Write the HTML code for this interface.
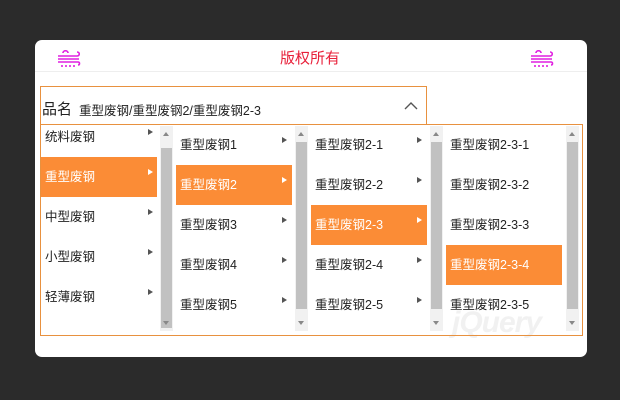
<!DOCTYPE html>
<html><head><meta charset="utf-8"><style>
*{margin:0;padding:0;box-sizing:border-box}
body{width:620px;height:400px;background:#2b2b2b;position:relative;overflow:hidden;font-family:"Liberation Sans","Noto Sans CJK SC",sans-serif}
.card{position:absolute;left:35px;top:40px;width:552px;height:317px;background:#fff;border-radius:7px}
.hr{position:absolute;left:35px;top:71px;width:552px;height:1px;background:#eee}
.title{position:absolute;left:260px;top:47px;width:100px;text-align:center;color:#e8203a;font-size:15px}
.ico{position:absolute;top:48px}
.inp{position:absolute;left:40px;top:86px;width:387px;height:39px;border:1px solid #e8913f;border-bottom:none}
.inp .l{position:absolute;left:1px;top:11px;font-size:15px;color:#222}
.inp .v{position:absolute;left:38px;top:13px;font-size:12.5px;color:#222}
.panel{position:absolute;left:40px;top:124px;width:543px;height:212px;border:1px solid #e8913f}
.col{position:absolute;top:125px;height:210px;overflow:hidden}
.it{position:absolute;left:0;height:40px;line-height:40px;font-size:12.5px;color:#222;padding-left:4px}
.it.on{background:#fb8c36;color:#fff}
.tri{position:absolute;width:0;height:0;border-left:5px solid #555;border-top:3.5px solid transparent;border-bottom:3.5px solid transparent}
.on .tri{border-left-color:#fff}
.sb{position:absolute;top:126px;width:13px;height:205px;background:#f1f1f1}
.sb .th{position:absolute;left:1px;width:11px;background:#c1c1c1}
.sb .up{position:absolute;left:3px;top:6px;border-bottom:4px solid #888;border-left:3.5px solid transparent;border-right:3.5px solid transparent}
.sb .dn{position:absolute;left:3px;bottom:6px;border-top:4px solid #888;border-left:3.5px solid transparent;border-right:3.5px solid transparent}
.wm{position:absolute;left:452px;top:306px;font-size:30px;font-style:italic;font-weight:bold;color:#f1f1f1;letter-spacing:-1px}
</style></head><body>
<div class="card"></div>
<div class="hr"></div>
<svg class="ico" style="left:57px" width="24" height="20" viewBox="0 0 24 20" fill="none" stroke="#e020e0" stroke-width="1.6"><path d="M6 5c0-3 5-3 5 0M1 8h19c3 0 3-4 0-4M1 11h21M1 14h20c2 0 2 3 0 3M5 17v2M9 17v2M13 17v2M17 17v2"/></svg>
<svg class="ico" style="left:530px" width="24" height="20" viewBox="0 0 24 20" fill="none" stroke="#e020e0" stroke-width="1.6"><path d="M6 5c0-3 5-3 5 0M1 8h19c3 0 3-4 0-4M1 11h21M1 14h20c2 0 2 3 0 3M5 17v2M9 17v2M13 17v2M17 17v2"/></svg>
<div class="title">版权所有</div>
<div class="inp"><span class="l">品名</span><span class="v">重型废钢/重型废钢2/重型废钢2-3</span>
<svg style="position:absolute;left:363px;top:14px" width="14" height="9" viewBox="0 0 14 9"><path d="M1 8L7 2L13 8" fill="none" stroke="#555" stroke-width="1.4"/></svg></div>
<div class="wm">jQuery</div>
<div class="panel"></div>

<div class="col" style="left:41px;width:116px">
<div class="it" style="top:-8px;width:116px">统料废钢<i class="tri" style="left:107px;top:12px"></i></div>
<div class="it on" style="top:32px;width:116px">重型废钢<i class="tri" style="left:107px;top:12px"></i></div>
<div class="it" style="top:72px;width:116px">中型废钢<i class="tri" style="left:107px;top:12px"></i></div>
<div class="it" style="top:112px;width:116px">小型废钢<i class="tri" style="left:107px;top:12px"></i></div>
<div class="it" style="top:152px;width:116px">轻薄废钢<i class="tri" style="left:107px;top:12px"></i></div>
</div>
<div class="sb" style="left:160px"><div class="up"></div><div class="th" style="top:22px;height:180px"></div><div class="dn"></div></div>

<div class="col" style="left:176px;width:116px">
<div class="it" style="top:0;width:116px">重型废钢1<i class="tri" style="left:106px;top:12px"></i></div>
<div class="it on" style="top:40px;width:116px">重型废钢2<i class="tri" style="left:106px;top:12px"></i></div>
<div class="it" style="top:80px;width:116px">重型废钢3<i class="tri" style="left:106px;top:12px"></i></div>
<div class="it" style="top:120px;width:116px">重型废钢4<i class="tri" style="left:106px;top:12px"></i></div>
<div class="it" style="top:160px;width:116px">重型废钢5<i class="tri" style="left:106px;top:12px"></i></div>
</div>
<div class="sb" style="left:295px"><div class="up"></div><div class="th" style="top:16px;height:167px"></div><div class="dn"></div></div>

<div class="col" style="left:311px;width:116px">
<div class="it" style="top:0;width:116px">重型废钢2-1<i class="tri" style="left:106px;top:12px"></i></div>
<div class="it" style="top:40px;width:116px">重型废钢2-2<i class="tri" style="left:106px;top:12px"></i></div>
<div class="it on" style="top:80px;width:116px">重型废钢2-3<i class="tri" style="left:106px;top:12px"></i></div>
<div class="it" style="top:120px;width:116px">重型废钢2-4<i class="tri" style="left:106px;top:12px"></i></div>
<div class="it" style="top:160px;width:116px">重型废钢2-5<i class="tri" style="left:106px;top:12px"></i></div>
</div>
<div class="sb" style="left:430px"><div class="up"></div><div class="th" style="top:16px;height:167px"></div><div class="dn"></div></div>

<div class="col" style="left:446px;width:116px">
<div class="it" style="top:0;width:116px">重型废钢2-3-1</div>
<div class="it" style="top:40px;width:116px">重型废钢2-3-2</div>
<div class="it" style="top:80px;width:116px">重型废钢2-3-3</div>
<div class="it on" style="top:120px;width:116px">重型废钢2-3-4</div>
<div class="it" style="top:160px;width:116px">重型废钢2-3-5</div>
</div>
<div class="sb" style="left:566px"><div class="up"></div><div class="th" style="top:16px;height:167px"></div><div class="dn"></div></div>
</body></html>
